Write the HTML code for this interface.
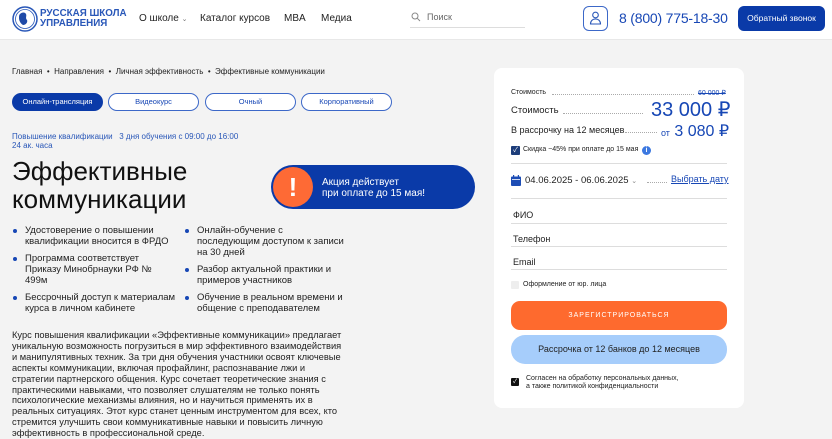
<!DOCTYPE html>
<html><head><meta charset="utf-8"><style>
*{box-sizing:border-box;margin:0;padding:0}
body{width:832px;height:439px;overflow:hidden;background:#f3f3f3;font-family:"Liberation Sans","Noto Sans CJK JP",sans-serif;color:#222;position:relative}
.a{position:absolute}
header{position:absolute;left:0;top:0;width:832px;height:40px;background:#fff;border-bottom:1px solid #e8e8e8}
.nav{font-size:10px;color:#222;top:13px}
.blue{color:#1747b5}
.tab{position:absolute;top:93px;height:18px;width:91px;border:1px solid #3c68c8;border-radius:9px;font-size:7.5px;text-align:center;line-height:16px;color:#1747b5;background:#fff}
.bl{font-size:9.5px;line-height:11px;color:#222}
.dot{position:absolute;width:4px;height:4px;border-radius:2px;background:#1747b5}
.card{left:494px;top:68px;width:250px;height:340px;background:#fff;border-radius:8px}
.line{position:absolute;left:17px;width:216px;height:1px;background:#ddd}
.inp{position:absolute;left:19px;font-size:9px;color:#222}
</style></head><body>
<header>
<svg class="a" style="left:12px;top:6px" width="26" height="26" viewBox="0 0 26 26"><circle cx="13" cy="13" r="12" fill="none" stroke="#2957b8" stroke-width="1.5"/><circle cx="13" cy="13" r="9.5" fill="#fff" stroke="#2957b8" stroke-width="0.8"/><path d="M8 8c2-2 5-2 6 0 1 2-1 4 1 6 1 2-1 5-4 5-2-1-4-4-4-7 0-2 0-3 1-4z" fill="#1f4aa8"/></svg>
<div class="a" style="left:40px;top:9px;font-size:9.8px;line-height:9.5px;font-weight:bold;color:#2957b8">РУССКАЯ ШКОЛА<br>УПРАВЛЕНИЯ</div>
<div class="a nav" style="left:139px">О школе <span style="font-size:7px;color:#777">⌄</span></div>
<div class="a nav" style="left:200px">Каталог курсов</div>
<div class="a nav" style="left:284px">MBA</div>
<div class="a nav" style="left:321px">Медиа</div>
<svg class="a" style="left:411px;top:12px" width="10" height="10" viewBox="0 0 10 10"><circle cx="4" cy="4" r="3" fill="none" stroke="#888" stroke-width="1"/><path d="M6.3 6.3L9 9" stroke="#888"/></svg>
<div class="a" style="left:427px;top:12px;font-size:9px;color:#666">Поиск</div>
<div class="a" style="left:410px;top:27px;width:115px;height:1px;background:#ddd"></div>
<div class="a" style="left:583px;top:6px;width:25px;height:25px;border:1px solid #3c68c8;border-radius:6px"></div>
<svg class="a" style="left:589px;top:11px" width="13" height="14" viewBox="0 0 13 14"><circle cx="6.5" cy="4" r="2.8" fill="none" stroke="#2957b8" stroke-width="1.1"/><path d="M1.5 13c0-3 2-5 5-5s5 2 5 5z" fill="none" stroke="#2957b8" stroke-width="1.1"/></svg>
<div class="a blue" style="left:619px;top:10px;font-size:14px;letter-spacing:-0.2px">8 (800) 775-18-30</div>
<div class="a" style="left:738px;top:6px;width:87px;height:25px;background:#0a3aa8;border-radius:6px;color:#fff;font-size:8.5px;text-align:center;line-height:25px">Обратный звонок</div>
</header>

<div class="a" style="left:12px;top:67px;font-size:8px;color:#222">Главная &nbsp;•&nbsp; Направления &nbsp;•&nbsp; Личная эффективность &nbsp;•&nbsp; Эффективные коммуникации</div>
<div class="tab" style="left:12px;background:#0a3aa8;color:#fff;border-color:#0a3aa8">Онлайн-трансляция</div>
<div class="tab" style="left:108px">Видеокурс</div>
<div class="tab" style="left:205px">Очный</div>
<div class="tab" style="left:301px">Корпоративный</div>
<div class="a blue" style="left:12px;top:133px;font-size:8px;line-height:8.5px;color:#2957b8">Повышение квалификации &nbsp; 3 дня обучения с 09:00 до 16:00<br>24 ак. часа</div>
<div class="a" style="left:12px;top:157px;font-size:26px;line-height:28px;color:#111">Эффективные<br>коммуникации</div>

<div class="a" style="left:271px;top:165px;width:204px;height:44px;background:#0a3aa8;border-radius:22px"></div>
<div class="a" style="left:273px;top:167px;width:40px;height:40px;background:#fe6a35;border-radius:20px;color:#fff;font-size:26px;font-weight:bold;text-align:center;line-height:40px">!</div>
<div class="a" style="left:322px;top:177px;font-size:10px;line-height:11px;color:#fff">Акция действует<br>при оплате до 15 мая!</div>

<div class="dot" style="left:13px;top:229px"></div>
<div class="a bl" style="left:25px;top:225px">Удостоверение о повышении<br>квалификации вносится в ФРДО</div>
<div class="dot" style="left:13px;top:257px"></div>
<div class="a bl" style="left:25px;top:253px">Программа соответствует<br>Приказу Минобрнауки РФ №<br>499м</div>
<div class="dot" style="left:13px;top:296px"></div>
<div class="a bl" style="left:25px;top:292px">Бессрочный доступ к материалам<br>курса в личном кабинете</div>
<div class="dot" style="left:185px;top:229px"></div>
<div class="a bl" style="left:197px;top:225px">Онлайн-обучение с<br>последующим доступом к записи<br>на 30 дней</div>
<div class="dot" style="left:185px;top:268px"></div>
<div class="a bl" style="left:197px;top:264px">Разбор актуальной практики и<br>примеров участников</div>
<div class="dot" style="left:185px;top:296px"></div>
<div class="a bl" style="left:197px;top:292px">Обучение в реальном времени и<br>общение с преподавателем</div>

<div class="a" style="left:12px;top:330px;width:340px;font-size:9.3px;line-height:10.9px;color:#222">Курс повышения квалификации «Эффективные коммуникации» предлагает<br>уникальную возможность погрузиться в мир эффективного взаимодействия<br>и манипулятивных техник. За три дня обучения участники освоят ключевые<br>аспекты коммуникации, включая профайлинг, распознавание лжи и<br>стратегии партнерского общения. Курс сочетает теоретические знания с<br>практическими навыками, что позволяет слушателям не только понять<br>психологические механизмы влияния, но и научиться применять их в<br>реальных ситуациях. Этот курс станет ценным инструментом для всех, кто<br>стремится улучшить свои коммуникативные навыки и повысить личную<br>эффективность в профессиональной среде.</div>

<div class="a card">
<div class="a" style="left:17px;top:21px;font-size:7px">Стоимость</div>
<div class="a" style="left:58px;top:26px;width:142px;border-top:1px dotted #aaa"></div>
<div class="a blue" style="left:204px;top:21px;font-size:7px;text-decoration:line-through">60 000 ₽</div>
<div class="a" style="left:17px;top:37px;font-size:9.5px">Стоимость</div>
<div class="a" style="left:69px;top:45px;width:80px;border-top:1px dotted #aaa"></div>
<div class="a blue" style="left:157px;top:29px;font-size:20px">33 000 ₽</div>
<div class="a" style="left:17px;top:57px;font-size:9px">В рассрочку на 12 месяцев</div>
<div class="a" style="left:131px;top:64px;width:32px;border-top:1px dotted #aaa"></div>
<div class="a blue" style="left:167px;top:53px;font-size:16px"><span style="font-size:9px">от</span> 3 080 ₽</div>
<div class="a" style="left:17px;top:78px;width:9px;height:9px;background:#1d3d7a;border-radius:1px;color:#fff;font-size:7px;line-height:9px;text-align:center">✓</div>
<div class="a" style="left:29px;top:78px;font-size:7px">Скидка −45% при оплате до 15 мая</div>
<div class="a" style="left:148px;top:78px;width:9px;height:9px;border-radius:5px;background:#3c78e0;color:#fff;font-size:7px;text-align:center;line-height:9px;font-weight:bold">i</div>
<div class="line" style="top:95px"></div>
<svg class="a" style="left:17px;top:107px" width="10" height="11" viewBox="0 0 10 11"><rect x="0" y="1.5" width="10" height="9.5" rx="1" fill="#1d4db5"/><rect x="2" y="0" width="1.2" height="3" fill="#1d4db5"/><rect x="6.8" y="0" width="1.2" height="3" fill="#1d4db5"/><rect x="1" y="4" width="8" height="0.8" fill="#fff"/></svg>
<div class="a" style="left:31px;top:107px;font-size:9.5px">04.06.2025 - 06.06.2025 <span style="font-size:7px;color:#888">⌄</span></div>
<div class="a" style="left:153px;top:114px;width:20px;border-top:1px dotted #aaa"></div>
<div class="a blue" style="left:177px;top:106px;font-size:9px;text-decoration:underline">Выбрать дату</div>
<div class="line" style="top:130px"></div>
<div class="inp" style="top:142px">ФИО</div><div class="line" style="top:155px"></div>
<div class="inp" style="top:166px">Телефон</div><div class="line" style="top:178px"></div>
<div class="inp" style="top:189px">Email</div><div class="line" style="top:201px"></div>
<div class="a" style="left:17px;top:213px;width:8px;height:8px;background:#eee;border-radius:1px"></div>
<div class="a" style="left:29px;top:213px;font-size:7px">Оформление от юр. лица</div>
<div class="a" style="left:17px;top:233px;width:216px;height:29px;background:#fe6a2e;border-radius:9px;color:#fff;font-size:7px;letter-spacing:1px;text-align:center;line-height:29px">ЗАРЕГИСТРИРОВАТЬСЯ</div>
<div class="a" style="left:17px;top:267px;width:216px;height:29px;background:#a6cdfb;border-radius:14px;color:#222;font-size:9px;text-align:center;line-height:29px">Рассрочка от 12 банков до 12 месяцев</div>
<div class="a" style="left:17px;top:310px;width:8px;height:8px;background:#111;border-radius:1px;color:#fff;font-size:6px;text-align:center;line-height:8px">✓</div>
<div class="a" style="left:32px;top:307px;font-size:7px;line-height:8px">Согласен на обработку персональных данных,<br>а также политикой конфиденциальности</div>
</div>
</body></html>
